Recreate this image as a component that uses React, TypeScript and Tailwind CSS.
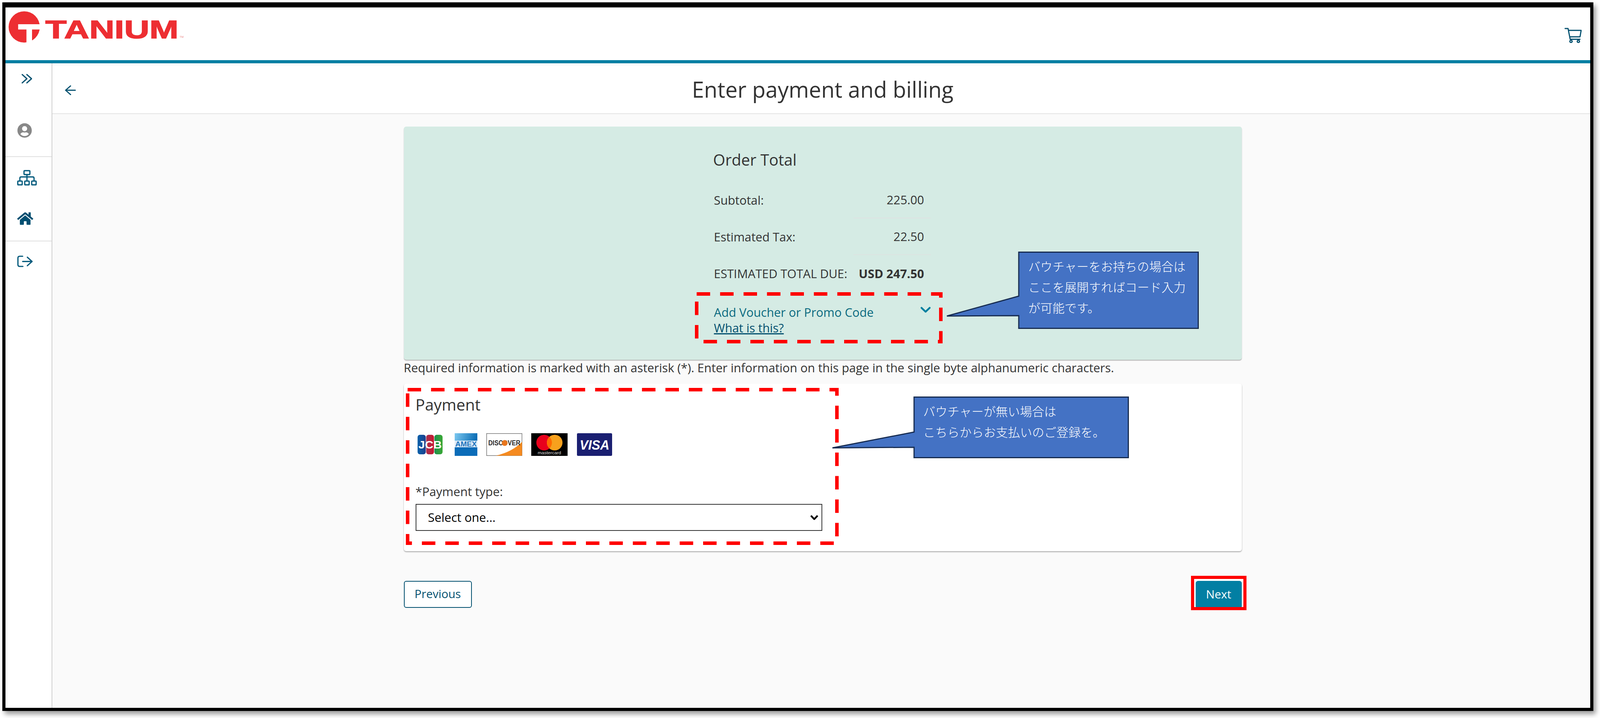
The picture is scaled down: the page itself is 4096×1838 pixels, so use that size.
import { FaHome, FaUserCircle } from "react-icons/fa";

const NAVY = "#02506f";

function TaniumLogo() {
  return (
    <svg width="450" height="82" viewBox="0 0 450 82" className="block">
      <circle cx="40" cy="40" r="40" fill="#ed2e32" />
      <path d="M24.5 33 H80 V46.5 H60 V80 H45.7 V46.5 H24.5 Z" fill="#fff" />
      <text
        x="94"
        y="68.5"
        fontFamily="'Liberation Sans', sans-serif"
        fontWeight="700"
        fontSize="64"
        textLength="341"
        lengthAdjust="spacingAndGlyphs"
        fill="#ed2e32"
        stroke="#ed2e32"
        strokeWidth="1.6"
      >
        TANIUM
      </text>
      <text x="438" y="68" fontFamily="'Liberation Sans', sans-serif" fontSize="7" fill="#e88">
        TM
      </text>
    </svg>
  );
}

function CartIcon() {
  return (
    <svg width="44" height="39" viewBox="0 0 210 185" fill="none" stroke={NAVY} strokeWidth="14" strokeLinejoin="round" strokeLinecap="round">
      <path d="M8 9 H44 L70 140 H190" />
      <path d="M50 32 H204 L190 110 H64" />
      <circle cx="80" cy="166" r="14" />
      <circle cx="170" cy="166" r="14" />
    </svg>
  );
}

function DoubleChevron() {
  return (
    <svg width="27" height="25" viewBox="0 0 43 40" fill="none" stroke={NAVY} strokeWidth="5" strokeLinecap="round" strokeLinejoin="round">
      <path d="M3 3 L22 20 L3 37" />
      <path d="M22 3 L41 20 L22 37" />
    </svg>
  );
}

function BackArrow() {
  return (
    <svg width="28" height="26" viewBox="0 0 44 41" fill="none" stroke={NAVY} strokeWidth="4.5" strokeLinecap="round" strokeLinejoin="round">
      <path d="M23 3 L3 20.5 L23 38" />
      <path d="M4 20.5 H42" />
    </svg>
  );
}

function SitemapIcon() {
  return (
    <svg width="50" height="40" viewBox="0 0 80 63" fill="none" stroke="#035a7c" strokeWidth="5">
      <rect x="28" y="2.5" width="24" height="16" rx="3" />
      <rect x="2.5" y="45" width="18" height="15.5" rx="2" />
      <rect x="31" y="45" width="18" height="15.5" rx="2" />
      <rect x="59.5" y="45" width="18" height="15.5" rx="2" />
      <path d="M11 44 V33 Q11 28 16 28 H64 Q69 28 69 33 V44 M40 18 V44" />
    </svg>
  );
}

function LogoutIcon() {
  return (
    <svg width="40" height="30" viewBox="0 0 63 47" fill="none" stroke="#035a7c" strokeWidth="5" strokeLinecap="round" strokeLinejoin="round">
      <path d="M22 3 H10 Q3 3 3 10 V37 Q3 44 10 44 H23" />
      <path d="M22 24 H59 M41 7 L60 24 L41 41" />
    </svg>
  );
}

function JcbLogo() {
  return (
    <svg width="64" height="50" viewBox="0 0 64 50">
      <defs>
        <linearGradient id="jb" x1="0" x2="1" y1="0" y2="0">
          <stop offset="0" stopColor="#0a62ab" />
          <stop offset="1" stopColor="#1d3f8c" />
        </linearGradient>
        <linearGradient id="jr" x1="0" x2="1" y1="0" y2="0">
          <stop offset="0" stopColor="#a8324f" />
          <stop offset="1" stopColor="#c8172f" />
        </linearGradient>
        <linearGradient id="jg" x1="0" x2="1" y1="0" y2="0">
          <stop offset="0" stopColor="#1f8f4d" />
          <stop offset="1" stopColor="#3aa935" />
        </linearGradient>
      </defs>
      <rect x="0" y="0" width="21" height="50" rx="6" fill="url(#jb)" />
      <rect x="22" y="0" width="20" height="50" rx="6" fill="url(#jr)" />
      <rect x="43" y="0" width="21" height="50" rx="6" fill="url(#jg)" />
      <text x="2" y="35" fontFamily="'Liberation Sans', sans-serif" fontWeight="700" fontSize="27" textLength="60" lengthAdjust="spacingAndGlyphs" fill="#fff">
        JCB
      </text>
    </svg>
  );
}

function AmexLogo() {
  return (
    <svg width="58" height="58" viewBox="0 0 58 58">
      <defs>
        <linearGradient id="am" x1="0" x2="1" y1="0" y2="0.15">
          <stop offset="0" stopColor="#7cc8f0" />
          <stop offset="1" stopColor="#0a6db5" />
        </linearGradient>
      </defs>
      <rect width="58" height="30" fill="url(#am)" />
      <rect y="30" width="58" height="28" fill="#0b6cb8" />
      <rect y="19" width="58" height="17" fill="#dbeaf6" />
      <text x="29" y="34" textAnchor="middle" fontFamily="'Liberation Sans', sans-serif" fontWeight="700" fontSize="19" textLength="55" lengthAdjust="spacingAndGlyphs" fill="#1f74bd">
        AMEX
      </text>
    </svg>
  );
}

function DiscoverLogo() {
  return (
    <svg width="92" height="58" viewBox="0 0 92 58">
      <rect x="0.75" y="0.75" width="90.5" height="56.5" fill="#fff" stroke="#777" strokeWidth="1.5" />
      <path d="M24 57.5 Q66 48 91.5 22 V57.5 Z" fill="#f58a1f" />
      <text x="5" y="31" fontFamily="'Liberation Sans', sans-serif" fontWeight="700" fontSize="18" textLength="82" lengthAdjust="spacingAndGlyphs" fill="#2b2b2b">
        DISCOVER
      </text>
      <circle cx="47" cy="25" r="7.5" fill="#e8761e" />
    </svg>
  );
}

function MastercardLogo() {
  return (
    <svg width="93" height="58" viewBox="0 0 93 58">
      <rect width="93" height="58" fill="#000" />
      <circle cx="33" cy="24" r="20" fill="#e8001c" />
      <circle cx="60" cy="24" r="20" fill="#f7a11d" />
      <path d="M46.5 9.3 A20 20 0 0 1 46.5 38.7 A20 20 0 0 1 46.5 9.3 Z" fill="#ff6a00" />
      <text x="46.5" y="54" textAnchor="middle" fontFamily="'Liberation Sans', sans-serif" fontSize="10.5" textLength="60" lengthAdjust="spacingAndGlyphs" fill="#ddd">
        mastercard
      </text>
    </svg>
  );
}

function VisaLogo() {
  return (
    <svg width="90" height="58" viewBox="0 0 90 58">
      <rect width="90" height="58" rx="3" fill="#1a1f71" />
      <text x="45" y="42" textAnchor="middle" fontFamily="'Liberation Sans', sans-serif" fontWeight="700" fontStyle="italic" fontSize="35" textLength="76" lengthAdjust="spacingAndGlyphs" fill="#fff">
        VISA
      </text>
    </svg>
  );
}

function Row({ label, value }: { label: string; value: string }) {
  return (
    <div className="flex h-[94px] items-center pl-[2px]">
      <span>{label}</span>
      <div className="ml-auto flex h-full w-[198px] items-center justify-end border-b-[2px] border-[#dde3e1] pr-[17px]">
        {value}
      </div>
    </div>
  );
}

export default function App() {
  return (
    <div className="h-[1838px] w-[4096px] overflow-hidden bg-white pl-[5.6px] pt-[5.6px] font-['Open_Sans','Noto_Sans_CJK_JP',sans-serif] text-[#333]">
      <div className="relative flex h-[1814.5px] w-[4073px] flex-col border-b-[8.4px] border-l-[8.8px] border-r-[8.8px] border-t-[13px] border-black shadow-[6px_8px_12px_rgba(0,0,0,0.4)]">
        {/* top bar */}
        <header className="flex h-[135px] shrink-0 items-start justify-between bg-white pl-[8.6px] pr-[22px] pt-[10px]">
          <TaniumLogo />
          <div className="mt-[42px]">
            <CartIcon />
          </div>
        </header>
        <div className="h-[8.7px] shrink-0 bg-[#027fa3]" />

        <div className="flex min-h-0 flex-1">
          {/* side nav */}
          <aside className="w-[120px] shrink-0 border-r-[2px] border-[#cfcfcf] bg-white shadow-[2px_0_4px_rgba(0,0,0,0.1)]">
            <div className="h-[240px] border-b-[2px] border-[#e0e0e0] pl-[30px] pt-[27px]">
              <div className="ml-[11px]">
                <DoubleChevron />
              </div>
              <FaUserCircle className="mt-[101px] text-[#888]" size={38} />
            </div>
            <div className="h-[216px] border-b-[2px] border-[#e0e0e0] pl-[30px] pt-[33px]">
              <SitemapIcon />
              <FaHome className="mt-[64px] text-[#024f71]" size={41} />
            </div>
            <div className="pl-[30px] pt-[36px]">
              <LogoutIcon />
            </div>
          </aside>

          <main className="flex min-w-0 flex-1 flex-col bg-[#fafafa]">
            <div className="relative flex h-[130px] shrink-0 items-center justify-center border-b-[2px] border-[#e4e4e4] bg-white pl-[8px] pt-[3px] shadow-[inset_0_6px_0_#fafafa]">
              <div className="absolute left-[32px] top-[56px]">
                <BackArrow />
              </div>
              <h1 className="text-[56px] leading-none">Enter payment and billing</h1>
            </div>

            <div className="ml-[900px] w-[2145px] pt-[32px]">
              {/* order total */}
              <section className="relative h-[597px] rounded-[6px] bg-[#d5ebe4] pl-[792px] pt-[60px] text-[30.7px] shadow-[0_2px_2px_rgba(0,0,0,0.3)]">
                <div className="w-[557px]">
                  <h2 className="mb-[29px] h-[52px] text-[40px] leading-[50px]">Order Total</h2>
                  <Row label="Subtotal:" value="225.00" />
                  <Row label="Estimated Tax:" value="22.50" />
                  <div className="flex h-[94px] items-center justify-between pl-[2px] pr-[17px]">
                    <span>ESTIMATED TOTAL DUE:</span>
                    <span className="font-bold">USD 247.50</span>
                  </div>
                  <div className="mt-[32px] flex h-[37px] items-start justify-between pl-[2px] leading-[40px] text-[#0a6a80]">
                    <span>Add Voucher or Promo Code</span>
                    <svg width="27" height="16" viewBox="0 0 27 16" fill="none" stroke="#027f9f" strokeWidth="4.5" strokeLinecap="round" strokeLinejoin="round" className="mt-[6px]">
                      <path d="M3 3 L13.5 13 L24 3" />
                    </svg>
                  </div>
                  <a className="pl-[2px] leading-[40px] text-[#02506f] underline">What is this?</a>
                </div>
              </section>

              <p className="mb-[21px] h-[40px] whitespace-nowrap text-[30.9px] leading-[40px]">
                Required information is marked with an asterisk (*). Enter information on this page in the single byte alphanumeric characters.
              </p>

              {/* payment */}
              <section className="h-[429px] rounded-[6px] bg-white pl-[30px] pt-[28px] shadow-[0_2px_3px_rgba(0,0,0,0.35)]">
                <h2 className="h-[52px] text-[40.5px] leading-[52px]">Payment</h2>
                <div className="ml-[5px] mt-[47px] flex h-[58px] items-center">
                  <JcbLogo />
                  <div className="ml-[31px]">
                    <AmexLogo />
                  </div>
                  <div className="ml-[23px]">
                    <DiscoverLogo />
                  </div>
                  <div className="ml-[23px]">
                    <MastercardLogo />
                  </div>
                  <div className="ml-[24px]">
                    <VisaLogo />
                  </div>
                </div>
                <label className="mt-[71px] block h-[40px] text-[31px] leading-[40px]">*Payment type:</label>
                <div className="relative mt-[12px] h-[68.5px] w-[1041px]">
                  <select className="h-full w-full appearance-none border-[2.5px] border-[#333] bg-white pl-[30px] text-[31px] text-black">
                    <option>Select one...</option>
                  </select>
                  <svg width="21" height="13" viewBox="0 0 21 13" fill="none" stroke="#000" strokeWidth="4.5" strokeLinejoin="round" className="pointer-events-none absolute right-[10px] top-[28px]">
                    <path d="M2 2 L10.5 11 L19 2" />
                  </svg>
                </div>
              </section>

              {/* nav buttons */}
              <div className="mt-[76px] flex items-start justify-between">
                <button className="h-[69px] w-[174px] rounded-[6px] border-[2.5px] border-[#02506f] bg-white pb-[3px] text-[29.5px] text-[#02506f]">
                  Previous
                </button>
                <div className="relative">
                  <div className="absolute -inset-x-[3px] -top-[4.5px] -bottom-[4.5px] bg-white" />
                  <button className="relative h-[71px] w-[118px] rounded-[6px] bg-[#027fa3] pb-[3px] text-[29.5px] text-white">Next</button>
                  <div className="absolute -left-[12px] -right-[12px] -top-[13px] -bottom-[4px] border-[8.8px] border-[#ff0000]" />
                </div>
              </div>
            </div>
          </main>
        </div>

        {/* annotations laid over the page: origin is the frame's inner corner, x-14.4 y-18.7 */}
        <svg width="634" height="131" viewBox="0 0 634 131" fill="none" className="absolute left-[1765.6px] top-[729.3px]">
          <rect x="4.5" y="4.5" width="625" height="122" stroke="#ff0000" strokeWidth="9" strokeDasharray="34.5 25.5" />
        </svg>
        <svg width="1108" height="402" viewBox="0 0 1108 402" fill="none" className="absolute left-[1025.6px] top-[974.3px]">
          <rect x="4.5" y="4.5" width="1099" height="393" stroke="#ff0000" strokeWidth="9" strokeDasharray="34.5 25.5" />
        </svg>

        <div className="absolute left-[2408.6px] top-[625.9px] h-[198px] w-[647px] font-['Noto_Sans_CJK_JP',sans-serif] text-[31px] font-light leading-[53px] text-white">
          <svg width="647" height="198" viewBox="0 0 647 198" className="absolute inset-0">
            <path d="M186 1.5 H645.5 V196.5 H186 V164 L2 165 L186 114 Z" fill="#4472c4" stroke="#172c51" strokeWidth="3" />
          </svg>
          <div className="absolute left-[210px] top-[10px] whitespace-nowrap">
            <p>バウチャーをお持ちの場合は</p>
            <p>ここを展開すればコード入力</p>
            <p>が可能です。</p>
          </div>
        </div>

        <div className="absolute left-[2115.6px] top-[996.8px] h-[158px] w-[761px] font-['Noto_Sans_CJK_JP',sans-serif] text-[31px] font-light leading-[53px] text-white">
          <svg width="761" height="158" viewBox="0 0 761 158" className="absolute inset-0">
            <path d="M211 1.5 H759.5 V156.5 H211 V130 L2 131.5 L211 91 Z" fill="#4472c4" stroke="#172c51" strokeWidth="3" />
          </svg>
          <div className="absolute left-[234px] top-[10px] whitespace-nowrap">
            <p>バウチャーが無い場合は</p>
            <p>こちらからお支払いのご登録を。</p>
          </div>
        </div>
      </div>
    </div>
  );
}
